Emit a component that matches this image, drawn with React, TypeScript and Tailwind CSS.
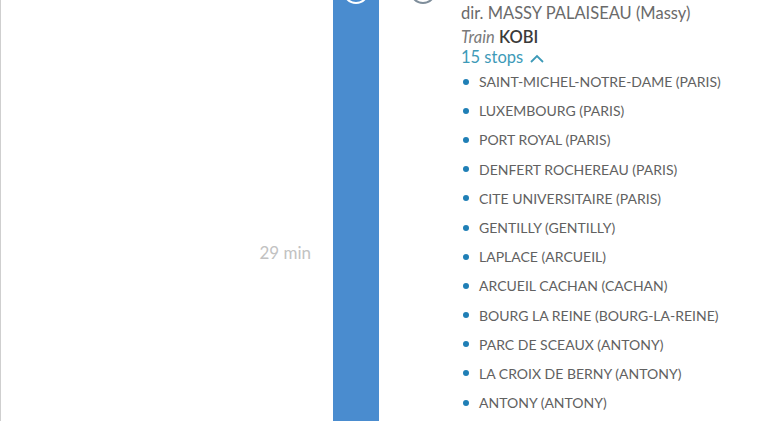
const stops = [
  "SAINT-MICHEL-NOTRE-DAME (PARIS)",
  "LUXEMBOURG (PARIS)",
  "PORT ROYAL (PARIS)",
  "DENFERT ROCHEREAU (PARIS)",
  "CITE UNIVERSITAIRE (PARIS)",
  "GENTILLY (GENTILLY)",
  "LAPLACE (ARCUEIL)",
  "ARCUEIL CACHAN (CACHAN)",
  "BOURG LA REINE (BOURG-LA-REINE)",
  "PARC DE SCEAUX (ANTONY)",
  "LA CROIX DE BERNY (ANTONY)",
  "ANTONY (ANTONY)",
]

export default function App() {
  return (
    <div className="relative flex h-[421px] w-[768px] overflow-hidden bg-white font-['Lato',sans-serif]">
      {/* Duration column */}
      <div className="flex w-[333px] shrink-0 items-center justify-end border-l border-[#cfcfcf] pr-[22px] pt-[84px]">
        <span className="text-[17px] text-[#c2c2c2]">29 min</span>
      </div>

      {/* Line bar */}
      <div className="relative w-[46px] shrink-0 bg-[#4a8ccf]">
        <div className="absolute left-[10px] top-[-22px] h-[26px] w-[26px] rounded-full border-2 border-white" />
      </div>

      {/* Details */}
      <div className="relative flex-1 pl-[82px]">
        <div className="absolute left-[31px] top-[-22px] h-[26px] w-[26px] rounded-full border-2 border-[#7f8e9b] bg-white" />
        <div className="pt-[3px] text-[16.5px] leading-[20px] text-[#6a6a6a]">
          dir. MASSY PALAISEAU (Massy)
        </div>
        <div className="mt-[4px] text-[16.5px] leading-[20px]">
          <span className="italic text-[#7a7a7a]">Train</span>{" "}
          <span className="font-semibold text-[#3a3a3a]">KOBI</span>
        </div>
        <div className="flex items-center gap-[7px] text-[16.5px] leading-[20px] text-[#3d9ab8]">
          15 stops
          <svg width="14" height="9" viewBox="0 0 14 9" fill="none" className="mt-[2px]">
            <polyline points="1,8 7,2 13,8" stroke="currentColor" strokeWidth="1.8" />
          </svg>
        </div>
        <ul>
          {stops.map((s) => (
            <li key={s} className="flex h-[29.2px] items-center text-[14px] text-[#616161]">
              <span className="ml-[2px] mr-[10px] h-[6px] w-[6px] rounded-full bg-[#1f7fb6]" />
              {s}
            </li>
          ))}
        </ul>
      </div>
    </div>
  )
}
